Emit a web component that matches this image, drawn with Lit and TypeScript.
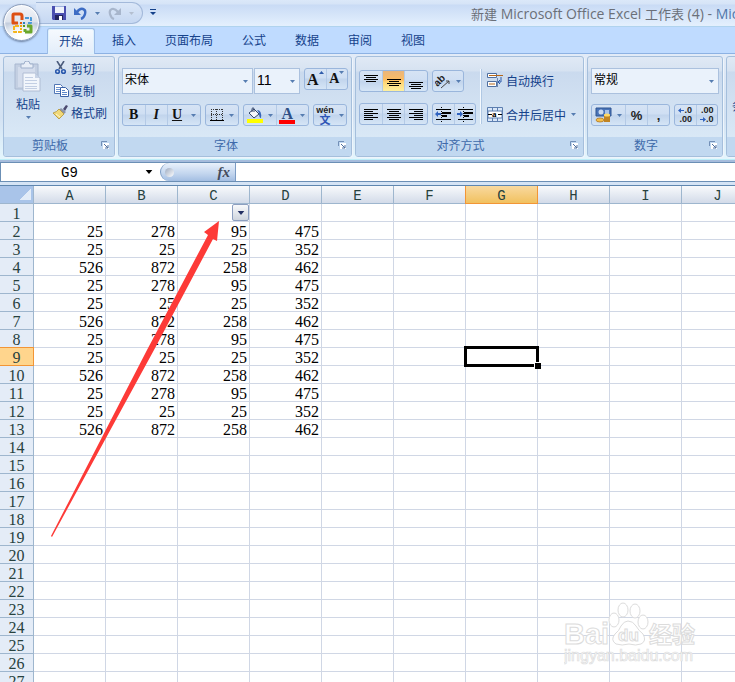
import { LitElement, html, css, svg, nothing, type TemplateResult } from "lit";
import { customElement, property } from "lit/decorators.js";

const COLUMNS = "ABCDEFGHIJKLMNOPQRSTUVWXYZ".split("");
const ROW_COUNT = 60;
const PATTERN = [
  [25, 278, 95, 475],
  [25, 25, 25, 352],
  [526, 872, 258, 462],
];
const ACTIVE = { col: "G", row: 9 };
const FILTER = { col: "C", row: 1 };

/** Value of a cell; rows 2 to 13 repeat the same three records. */
const valueAt = (row: number, col: number) =>
  row >= 2 && row <= 13 && col < 4 ? PATTERN[(row - 2) % 3][col] : nothing;

const caret = html`<svg class="caret" width="5" height="3" viewBox="0 0 5 3" aria-hidden="true"><path d="M0 0h5L2.5 3z" fill="currentColor"/></svg>`;

const icon = (w: number, h: number, body: TemplateResult | unknown) =>
  html`<svg width=${w} height=${h} viewBox="0 0 ${w} ${h}" aria-hidden="true">${body}</svg>`;

/** Horizontal bars given as [x, y, width]. */
const bars = (list: number[][], color = "#000") =>
  list.map(([x, y, w]) => svg`<path d="M${x} ${y}h${w}v1h-${w}z" fill=${color}/>`);

const icons = {
  office: icon(22, 22, svg`
    <g fill="none" stroke-linejoin="round">
      <path d="M7 11H2V3q0-1 1-1h6q2 0 2 2v4" stroke="#dd4f12" stroke-width="3"/>
      <path d="M14 6h6v5h-4" stroke="#4a9ad8" stroke-width="2" stroke-dasharray="4 1"/>
      <path d="M8 14H3v6h7v-4" stroke="#f5b51c" stroke-width="2" stroke-dasharray="4 1"/>
      <path d="M14 20h6v-6h-4M14 20v-3" stroke="#6aa72c" stroke-width="3"/>
    </g>
    <path d="M9 10h2v2H9z" fill="#e05a10"/><path d="M12 10h2v2h-2z" fill="#2d7fc4"/>
    <path d="M9 13h2v2H9z" fill="#f0a010"/><path d="M12 13h2v2h-2z" fill="#559a20"/>`),
  save: icon(14, 14, svg`
    <path d="M0 0h14v14H1l-1-1z" fill="#4a4fb0"/><path d="M3 0h9v7H3z" fill="#eef2fb"/>
    <path d="M3 0h9v1H3z" fill="#9fb2e0"/><path d="M3 9h8v5H3z" fill="#23255f"/><path d="M7 10h3v4H7z" fill="#fff"/>`),
  undo: icon(13, 13, svg`
    <path d="M3 5Q6 1 9 2t2 5-4 5" fill="none" stroke="#3d6cc4" stroke-width="2.4"/>
    <path d="M0 1v7h7z" fill="#3d6cc4"/>`),
  redo: icon(13, 13, svg`
    <path d="M10 5Q7 1 4 2T2 7t4 5" fill="none" stroke="#a8b6cc" stroke-width="2.2"/>
    <path d="M13 1v7H6z" fill="#a8b6cc"/>`),
  paste: icon(28, 32, svg`
    <path d="M1 3h23v25H1z" fill="#c3cfe2" stroke="#a9b8d0"/><path d="M4 6h17v20H4z" fill="#d3dcec"/>
    <path d="M7 3h3q0-3 3-3t3 3h3v4H7z" fill="#e8eef7" stroke="#9fb0cb"/>
    <path d="M9 12h12l5 5v13H9z" fill="#f2f6fc" stroke="#b0bdd4"/>
    <path d="M21 12v5h5z" fill="#c7d3e6"/>
    <path d="M11 16.500h8M11 19.500h12M11 22.500h12M11 25.500h12M11 27.500h12" stroke="#c3cfe4"/>`),
  cut: icon(12, 14, svg`
    <path d="M2 0l5 8M9 0L4 8" stroke="#4c5c7c" stroke-width="1.600"/>
    <circle cx="2.500" cy="10.500" r="1.800" fill="none" stroke="#2b59ad" stroke-width="1.600"/>
    <circle cx="8.500" cy="10.500" r="1.800" fill="none" stroke="#2b59ad" stroke-width="1.600"/>`),
  copy: icon(15, 13, svg`
    <path d="M.5.5h6l2 2v7h-8z" fill="#fff" stroke="#5277b5"/><path d="M2 3.500h4M2 5.500h4M2 7.500h4" stroke="#6d93cf"/>
    <path d="M6.500 3.500h5l3 3v6h-8z" fill="#fff" stroke="#3a62a8"/><path d="M8 6.500h3M8 8.500h5M8 10.500h5" stroke="#5b86c9"/>`),
  brush: icon(16, 14, svg`
    <path d="M10 4l3-4 2 1-3 5z" fill="#4b4a70"/><path d="M8 3l5 4-2 2-5-4z" fill="#8b93a8"/>
    <path d="M6 4l5 5-5 5-6-6q4-1 6-4z" fill="#f0d878" stroke="#b39335" stroke-width=".8"/><path d="M3 9l4 3" stroke="#fff6c8"/>`),
  borders: icon(14, 14, svg`
    <path d="M1 1.500h12M1 6.500h12M1.500 1v11M6.500 1v11M12.500 1v11" stroke="#333" stroke-dasharray="1 1"/>
    <path d="M0 12h14v1H0z" fill="#000"/>`),
  fill: icon(16, 16, svg`
    <path d="M2 6l5-4 5 5-5 4z" fill="#f4f7fc" stroke="#34476b"/><path d="M5 5V1.500Q6 0 7 1.500V5" fill="none" stroke="#34476b"/>
    <path d="M10 3q5 0 4 8-2 0-2-5z" fill="#3564b8"/><path d="M0 12h16v4H0z" fill="#ff0"/>`),
  redBar: icon(16, 4, svg`<path d="M0 0h16v4H0z" fill="#f00"/>`),
  up: icon(5, 3, svg`<path d="M0 3h5L2.500 0z" fill="#2f5cab"/>`),
  top: icon(14, 15, bars([[0, 1, 14], [2, 3, 10], [0, 5, 14], [2, 7, 10]])),
  middle: icon(14, 15, bars([[0, 5, 14], [2, 7, 10], [0, 9, 14], [2, 11, 10]])),
  bottom: icon(14, 15, bars([[0, 8, 14], [2, 10, 10], [0, 12, 14], [2, 14, 10]])),
  left: icon(14, 13, bars([[0, 1, 14], [0, 3, 9], [0, 5, 14], [0, 7, 9], [0, 9, 14], [0, 11, 9]])),
  center: icon(14, 13, bars([[0, 1, 14], [2, 3, 10], [0, 5, 14], [2, 7, 10], [0, 9, 14], [2, 11, 10]])),
  right: icon(14, 13, bars([[0, 1, 14], [5, 3, 9], [0, 5, 14], [5, 7, 9], [0, 9, 14], [5, 11, 9]])),
  outdent: icon(16, 15, svg`${bars([[1, 2, 5], [7, 2, 9], [7, 5, 9], [7, 6, 9], [7, 8, 5], [7, 9, 5], [1, 12, 5], [7, 12, 9]])}
    <path d="M6.500 0v15" stroke="#000" stroke-dasharray="1 1"/><path d="M0 7l3-3v2h3v2H3v2z" fill="#2f62c0"/>`),
  indent: icon(16, 15, svg`${bars([[1, 2, 5], [7, 2, 9], [7, 5, 9], [7, 6, 9], [7, 8, 5], [7, 9, 5], [1, 12, 5], [7, 12, 9]])}
    <path d="M6.500 0v15" stroke="#000" stroke-dasharray="1 1"/><path d="M6 7L3 4v2H0v2h3v2z" fill="#2f62c0"/>`),
  orient: icon(16, 15, svg`
    <g transform="rotate(-45 6 8)"><text x="0" y="9" font-size="10" font-weight="700" font-family="Liberation Sans, sans-serif" fill="#222">ab</text></g>
    <path d="M6 14l8-7M14 7h-3M14 7v3" stroke="#444" fill="none"/>`),
  wrap: icon(16, 15, svg`
    <path d="M.5.5h9v4h-9zM.5 8.500h9v5h-9z" fill="#fff" stroke="#4f6f9f"/>
    <path d="M2 2.500h14M2 11h6" stroke="#b5681a"/><path d="M11 5v9h-1V5z" fill="#6d87b0"/>
    <path d="M14 4v5h-3l2-2M11 9l2 2" fill="none" stroke="#2f5cab"/>`),
  merge: icon(16, 15, svg`
    <path d="M.5.5h15v14H.5z" fill="#d8e6f8" stroke="#5c7eb0"/><path d="M5.500 0v4M10.500 0v4M5.500 11v4M10.500 11v4" stroke="#5c7eb0"/>
    <path d="M1 4h14v7H1z" fill="#fff" stroke="#5c7eb0"/><path d="M1 7.500h4M11 7.500h4" stroke="#000"/>
    <text x="5" y="10" font-size="9" font-weight="700" font-family="Liberation Serif, serif" fill="#000">a</text>`),
  currency: icon(17, 16, svg`
    <path d="M1 1h15v8H1z" fill="#4a74b8" stroke="#2f5491"/><circle cx="6" cy="5" r="2.500" fill="#c9daf2"/><path d="M10 3h4v4h-4z" fill="#a9c2e8"/>
    <path d="M9 8h6v7H9z" fill="#e9a82d"/><path d="M9 10h6M9 12h6M9 14h6" stroke="#99601a"/>
    <ellipse cx="12" cy="8" rx="3" ry="1.500" fill="#ffd968"/><ellipse cx="5" cy="13" rx="4" ry="2" fill="#f3bd4b" stroke="#a66f1c" stroke-width=".7"/>`),
  arrowLeft: icon(6, 5, svg`<path d="M0 2.500L3 0v2h3v1H3v2z" fill="#2f62c0"/>`),
  arrowRight: icon(6, 5, svg`<path d="M6 2.500L3 0v2H0v1h3v2z" fill="#2f62c0"/>`),
  launcher: icon(8, 8, svg`
    <path d="M.5 5V.5H6" fill="none" stroke="#7390b8"/><path d="M2 2h6v6H2z" fill="#fff"/>
    <path d="M3 3l4 4M7 4v3H4" fill="none" stroke="#4c6f9f"/>`),
};

@customElement("ribbon-group")
class RibbonGroup extends LitElement {
  @property() label = "";
  static styles = css`
    :host {
      display: flex; flex-direction: column; flex: none; box-sizing: border-box; height: 101px;
      border: 1px solid #a5bfdc; border-radius: 3px; overflow: hidden;
      box-shadow: 1px 1px 0 #eef5fc;
      background: linear-gradient(#e0e9f5 0, #d6e2f1 14px, #cadaee 15px, #d9e8f6 80px);
    }
    .body { flex: 1; padding: 0 3px; }
    footer {
      display: flex; align-items: center; height: 19px; padding: 0 5px 0 0;
      background: #c1d8f0; color: #3e6aaa; text-align: center; font-size: 12px; line-height: 19px;
    }
    .name { flex: 1; padding-right: 5px; }
    button { border: 0; padding: 0; width: 8px; height: 12px; background: none; display: flex; }
  `;
  render() {
    return html`<div class="body"><slot></slot></div>
      <footer><span class="name">${this.label}</span>
        ${this.label ? html`<button aria-label=${`${this.label}设置`}>${icons.launcher}</button>` : nothing}
      </footer>`;
  }
}

@customElement("app-root")
class AppRoot extends LitElement {
  static styles = css`
    :host {
      display: flex; flex-direction: column; position: relative; height: 100vh; overflow: hidden;
      font: 12px "Liberation Sans", "Noto Sans CJK SC", sans-serif; color: #15428b; background: #fff;
    }
    * { box-sizing: border-box; }
    button { font: inherit; color: inherit; border: 0; padding: 0; margin: 0; background: none; }
    button, .drop { display: flex; align-items: center; justify-content: center; }
    svg { display: block; flex: none; }
    .caret { color: #567db1; }

    .title-bar {
      display: flex; align-items: flex-start; flex: none; height: 27px; padding-left: 36px; overflow: hidden;
      background: linear-gradient(#dbe8f9 0, #d6e4f7 4px, #c9dbf5 5px, #e3effd 25px);
      border-bottom: 1px solid #b0d3ee;
    }
    .title-bar > * { flex: none; }
    .quick {
      display: flex; align-items: center; height: 22px; width: 107px; margin-top: 2px; padding-left: 16px; gap: 8px;
      border: 1px solid #a3b9da; border-left: 0; border-radius: 0 11px 11px 0;
      background: linear-gradient(#dbe7f8, #c6d8f2);
    }
    .quick .pale .caret { color: #b4bfd0; }
    .more { width: 16px; height: 20px; margin: 2px 0 0 2px; color: #15428b; }
    h1 {
      margin: 0 0 0 310px; white-space: pre; font: 14px/28px "Open Sans", sans-serif; color: #6b7079;
    }
    h1 .cjk { font: 13px/28px "Noto Sans CJK SC", sans-serif; }
    h1 .app { color: #5277a8; }
    .office {
      position: absolute; left: 3px; top: 4px; width: 37px; height: 37px; border-radius: 50%;
      border: 1px solid #8c9ebb;
      background: radial-gradient(circle at 50% 90%, #fff 10%, transparent 50%), linear-gradient(#f4f6fa 0, #dde3ed 48%, #c3cddd 52%, #f2f7fc);
      box-shadow: 0 1px 2px #6a7f9f, inset 0 0 1px 1px #fff;
    }

    .tabs {
      display: flex; gap: 1px; flex: none; height: 27px; padding: 1px 0 0 47px; background: #bfdbff;
      border-bottom: 1px solid #8db2e3;
    }
    .tabs button { padding: 0 14px 3px; height: 26px; }
    .tabs .active {
      padding: 0 11px 3px; margin-right: 2px; border: 1px solid #9dbce6; border-bottom: 0; border-radius: 3px 3px 0 0;
      background: linear-gradient(#f6fafe, #e3edfa); box-shadow: inset 0 0 0 1px #dff2fd;
    }

    .ribbon {
      display: flex; gap: 3px; flex: none; padding: 2px 0 3px 3px; height: 106px; overflow: hidden;
      background: linear-gradient(#e2ebf7, #d3e2f3 60%, #e4f6fd); border-bottom: 1px solid #bdeef8;
    }
    .clip { width: 112px; }
    .font { width: 234px; }
    .align { width: 229px; }
    .number { width: 136px; }
    .styles { width: 200px; }
    .rules { margin: 40px 0 0 2px; white-space: nowrap; }
    .clip-body { display: flex; gap: 9px; padding: 0 0 0 5px; }
    .paste { flex: none; flex-direction: column; width: 32px; margin-top: 4px; height: 68px; justify-content: flex-start; }
    .paste span { margin: 2px 0 4px; }
    .stack { display: flex; flex-direction: column; white-space: nowrap; }
    .stack button { height: 22px; justify-content: flex-start; gap: 2px; }
    .stack .pic { width: 16px; display: flex; justify-content: center; }
    .line { display: flex; gap: 4px; height: 22px; margin-top: 11px; }
    .line.first { height: 25px; gap: 1px; }
    .set {
      display: flex; height: 22px; border: 1px solid #9ab6dc; border-radius: 3px;
      background: linear-gradient(#d6e3f4 0, #cfdff3 45%, #c1d4ec 50%, #d5e5f6);
    }
    .set button { flex: 1; gap: 5px; }
    .set button + button { border-left: 1px solid #b4cae6; }
    .set button.wide { flex: none; width: 33px; }
    .set button.spread { gap: 9px; }
    .set .on { background: linear-gradient(#e9b57c, #fdbd62 45%, #ffd575 55%, #fdf0a0); }
    .w44 { width: 44px; } .w79 { width: 79px; } .w34 { width: 34px; } .w66 { width: 66px; }
    .w69 { width: 69px; } .w32 { width: 32px; }
    .grow { margin-left: 3px; }
    .drop { position: relative; background: #eaf2fb; border: 1px solid #abc1de; height: 26px; color: #000; }
    .drop select {
      appearance: none; width: 100%; height: 100%; border: 0; background: none; padding: 0 12px 2px 2px; margin: 0; font: inherit; color: inherit;
    }
    .drop .caret { position: absolute; right: 4px; top: 11px; pointer-events: none; }
    .face { width: 131px; } .size { width: 46px; font-size: 14px; } .format { width: 128px; }
    .letter { font: bold 14px "Liberation Serif", serif; color: #111; }
    .big { font-size: 16px; }
    .blue { color: #2f4f86; line-height: 13px; font-size: 16px; }
    .italic { font-style: italic; } .under { text-decoration: underline; }
    .set .raised { align-items: flex-start; padding-top: 2px; gap: 0; }
    .colour { display: flex; flex-direction: column; align-items: center; }
    .phonetic { display: flex; flex-direction: column; align-items: center; font: bold 9px/8px "Liberation Sans", sans-serif; color: #222; }
    .phonetic b { font: bold 11px/11px "Noto Sans CJK SC", sans-serif; color: #2f55b5; }
    .align-body { display: flex; }
    .columns { width: 122px; border-right: 1px solid #f5faff; box-shadow: 1px 0 0 #b0c8e4; height: 55px; margin-top: 12px; }
    .columns .line { margin-top: 11px; } .columns .line:first-child { margin-top: 1px; }
    .texts { display: flex; flex-direction: column; gap: 12px; margin: 12px 0 0 6px; }
    .texts button { height: 22px; justify-content: flex-start; gap: 3px; white-space: nowrap; }
    .texts .caret { margin-left: 2px; }
    .sym { font: bold 13px "Liberation Sans", sans-serif; color: #222; }
    .dec { display: grid; font: bold 9px/9px "Liberation Sans", sans-serif; color: #222; justify-items: end; }
    .dec span { display: flex; align-items: center; height: 9px; }

    .formula {
      display: flex; flex: none; height: 22px; border-top: 2px solid #a6bcdc; background: #fff;
    }
    .strip { display: flex; flex: 1; border: solid #6b8fb5; border-width: 1px 0 1px 1px; min-width: 0; }
    .formula input { border: 0; outline: 0; margin: 0; padding: 0; background: none; min-width: 0; }
    .formula input.name { width: 137px; padding-top: 2px; text-align: center; font: 14px "Liberation Mono", monospace; color: #000; }
    .formula .drop-btn { width: 22px; color: #000; }
    .drop-btn .caret, .filter .caret { color: inherit; width: 8px; height: 4px; }
    .fx {
      width: 76px; justify-content: space-between; padding: 0 5px 0 4px; border: 1px solid #7c9cc4; border-width: 0 1px 0 1px;
      border-radius: 9px 0 0 9px; background: linear-gradient(#e9f1fb, #c2d5ee 60%, #a3bee2);
      font: italic bold 15px/15px "Liberation Serif", serif; color: #444c5c;
    }
    .dot { width: 9px; height: 9px; border-radius: 50%; background: linear-gradient(135deg, #9caac0, #fff); }
    .entry { flex: 1; }

    .sheet { position: relative; flex: 1; min-height: 0; overflow: hidden; border-top: 3px solid #d5e4f5; }
    .frame { border-top: 1px solid #5f87b0; }
    table { table-layout: fixed; width: 1906px; border-collapse: separate; border-spacing: 0; }
    col.rows { width: 34px; } col.cells { width: 72px; }
    tr { height: 18px; }
    th, td { padding: 3px 0 0; height: 18px; border: solid #d0d7e5; border-width: 0 1px 1px 0; }
    td { font: 16px/14px "Liberation Serif", serif; color: #000; text-align: right; padding-right: 2px; }
    th { font-weight: 400; color: #27413e; border-color: #9eb6ce; }
    thead th { font: 14px/14px "Liberation Mono", monospace; background: linear-gradient(#f8fafc, #d3dbe9); }
    tbody th { font: 16px/14px "Liberation Serif", serif; background: #e4ecf7; }
    th.corner { background: linear-gradient(135deg, transparent 50%, #e2ecf8 50%) 20px 3px / 11px 11px no-repeat, #a9c4e9; }
    thead th.current { background: linear-gradient(#f9d99f, #f1c15f); border-color: #f29536; box-shadow: -1px 0 0 #f29536; }
    tbody th.current { background: #ffd58d; border-color: #f29536; box-shadow: 0 -1px 0 #f29536; }
    td.anchor { position: relative; }
    .cursor { position: absolute; inset: -2px; border: 3px solid #000; }
    .cursor::after {
      content: ""; position: absolute; right: -5px; bottom: -5px; width: 6px; height: 6px;
      background: #000; border: solid #fff; border-width: 1px 0 0 1px;
    }
    .filter {
      position: absolute; right: 0; top: 0; width: 17px; height: 17px; border: 1px solid #8d9fc0; border-radius: 2px;
      background: linear-gradient(#f8f9fb, #cfd5de); color: #232f63;
    }
    .pointer { position: absolute; left: 50px; top: 32px; }
    .mark {
      position: absolute; right: 38px; bottom: 16px; width: 133px; height: 64px;
      font-family: "Liberation Sans", "Noto Sans CJK SC", sans-serif;
    }
  `;

  private select(cls: string, label: string, value: string) {
    return html`<div class="drop ${cls}"><select aria-label=${label}><option>${value}</option></select>${caret}</div>`;
  }

  private clipboard() {
    return html`<ribbon-group class="clip" label="剪贴板"><div class="clip-body">
      <button class="paste">${icons.paste}<span>粘贴</span>${caret}</button>
      <div class="stack">
        <button><span class="pic">${icons.cut}</span>剪切</button>
        <button><span class="pic">${icons.copy}</span>复制</button>
        <button><span class="pic">${icons.brush}</span>格式刷</button>
      </div></div></ribbon-group>`;
  }

  private font() {
    return html`<ribbon-group class="font" label="字体">
      <div class="line first">
        ${this.select("face", "字体", "宋体")}${this.select("size", "字号", "11")}
        <div class="set w44 grow">
          <button class="raised" aria-label="增大字号"><span class="letter big">A</span>${icons.up}</button>
          <button class="raised" aria-label="减小字号"><span class="letter">A</span>${caret}</button>
        </div>
      </div>
      <div class="line">
        <div class="set w79">
          <button aria-label="加粗"><span class="letter">B</span></button>
          <button aria-label="倾斜"><span class="letter italic">I</span></button>
          <button class="wide spread" aria-label="下划线"><span class="letter under">U</span>${caret}</button>
        </div>
        <div class="set w34"><button aria-label="边框">${icons.borders}${caret}</button></div>
        <div class="set w66">
          <button aria-label="填充颜色">${icons.fill}${caret}</button>
          <button aria-label="字体颜色"><span class="colour"><span class="letter blue">A</span>${icons.redBar}</span>${caret}</button>
        </div>
        <div class="set w34"><button aria-label="拼音"><span class="phonetic">wén<b>文</b></span>${caret}</button></div>
      </div></ribbon-group>`;
  }

  private alignment() {
    return html`<ribbon-group class="align" label="对齐方式"><div class="align-body">
      <div class="columns">
        <div class="line">
          <div class="set w69">
            <button aria-label="顶端对齐">${icons.top}</button>
            <button class="on" aria-label="垂直居中">${icons.middle}</button>
            <button aria-label="底端对齐">${icons.bottom}</button>
          </div>
          <div class="set w32"><button aria-label="方向">${icons.orient}${caret}</button></div>
        </div>
        <div class="line">
          <div class="set w69">
            <button aria-label="左对齐">${icons.left}</button>
            <button aria-label="居中">${icons.center}</button>
            <button aria-label="右对齐">${icons.right}</button>
          </div>
          <div class="set w44">
            <button aria-label="减少缩进">${icons.outdent}</button>
            <button aria-label="增加缩进">${icons.indent}</button>
          </div>
        </div>
      </div>
      <div class="texts">
        <button>${icons.wrap}自动换行</button>
        <button>${icons.merge}合并后居中${caret}</button>
      </div></div></ribbon-group>`;
  }

  private number() {
    return html`<ribbon-group class="number" label="数字">
      <div class="line first">${this.select("format", "数字格式", "常规")}</div>
      <div class="line">
        <div class="set w79">
          <button class="wide" aria-label="会计数字格式">${icons.currency}${caret}</button>
          <button class="sym">%</button>
          <button class="sym">,</button>
        </div>
        <div class="set w44">
          <button aria-label="增加小数位数"><span class="dec"><span>${icons.arrowLeft}.0</span><span>.00</span></span></button>
          <button aria-label="减少小数位数"><span class="dec"><span>.00</span><span>${icons.arrowRight}.0</span></span></button>
        </div>
      </div></ribbon-group>`;
  }

  private cell(row: number, name: string, index: number) {
    if (row === ACTIVE.row && name === ACTIVE.col) return html`<td class="anchor"><div class="cursor"></div></td>`;
    if (row === FILTER.row && name === FILTER.col)
      return html`<td class="anchor"><button class="filter" aria-label="筛选">${caret}</button></td>`;
    return html`<td>${valueAt(row, index)}</td>`;
  }

  private grid() {
    return html`<table>
      <colgroup><col class="rows">${COLUMNS.map(() => html`<col class="cells">`)}</colgroup>
      <thead><tr><th class="corner" aria-label="全选"></th>
        ${COLUMNS.map((c) => html`<th scope="col" class=${c === ACTIVE.col ? "current" : ""}>${c}</th>`)}</tr></thead>
      <tbody>${Array.from({ length: ROW_COUNT }, (_, i) => i + 1).map((r) => html`<tr>
        <th scope="row" class=${r === ACTIVE.row ? "current" : ""}>${r}</th>
        ${COLUMNS.map((c, i) => this.cell(r, c, i))}</tr>`)}</tbody></table>`;
  }

  private watermark() {
    return html`<svg class="mark" viewBox="0 0 133 64" aria-hidden="true">
      <g fill="#fff" stroke="#dcdcdc">
        <text x="0" y="42" font-size="29" font-weight="700">Bai</text>
        <ellipse cx="50" cy="18" rx="5" ry="7"/><ellipse cx="59" cy="8" rx="5" ry="7"/>
        <ellipse cx="71" cy="9" rx="5" ry="7"/><ellipse cx="79" cy="20" rx="5" ry="7"/>
        <path d="M64 19q5 0 8 5t7 8q4 7-2 10-5 2-12 0-7 2-13 0-6-4-1-10 4-3 6-8 3-5 7-5z"/>
        <text x="54" y="39" font-size="17" font-weight="700">du</text>
        <text x="85" y="41" font-size="23" font-weight="700">经验</text>
        <text x="0" y="59" font-size="16" stroke-width=".7">jingyan.baidu.com</text>
      </g></svg>`;
  }

  render() {
    return html`
      <header class="title-bar">
        <div class="quick">
          <button aria-label="保存">${icons.save}</button>
          <button aria-label="撤消">${icons.undo}</button>
          <button aria-label="撤消列表">${caret}</button>
          <button aria-label="恢复">${icons.redo}</button>
          <button class="pale" aria-label="恢复列表">${caret}</button>
        </div>
        <button class="more" aria-label="自定义快速访问工具栏">${icon(6, 6, svg`<path d="M0 0h6v1H0zM0 3h6L3 6z" fill="currentColor"/>`)}</button>
        <h1><span class="cjk">新建</span> Microsoft Office Excel <span class="cjk">工作表</span> (4) - <span class="app">Microsoft Excel</span></h1>
      </header>
      <button class="office" aria-label="Office 按钮">${icons.office}</button>
      <nav class="tabs">
        <button class="active">开始</button>
        ${["插入", "页面布局", "公式", "数据", "审阅", "视图"].map((t) => html`<button>${t}</button>`)}
      </nav>
      <div class="ribbon">
        ${this.clipboard()}${this.font()}${this.alignment()}${this.number()}
        <ribbon-group class="styles"><button class="rules">条件格式</button></ribbon-group>
      </div>
      <div class="formula"><div class="strip">
        <input class="name" aria-label="名称框" value="G9">
        <button class="drop-btn" aria-label="名称列表">${caret}</button>
        <button class="fx" aria-label="插入函数"><span class="dot"></span>fx</button>
        <input class="entry" aria-label="编辑栏">
      </div></div>
      <main class="sheet"><div class="frame">${this.grid()}</div>
        <svg class="pointer" width="172" height="320" viewBox="50 217 172 320" aria-hidden="true">
          <path d="M219 221l-2 20-4-2L154 350 52 537l-1-1L147 350 208 235l-4-3z" fill="#fd3a37"/>
        </svg>
        ${this.watermark()}
      </main>`;
  }
}
